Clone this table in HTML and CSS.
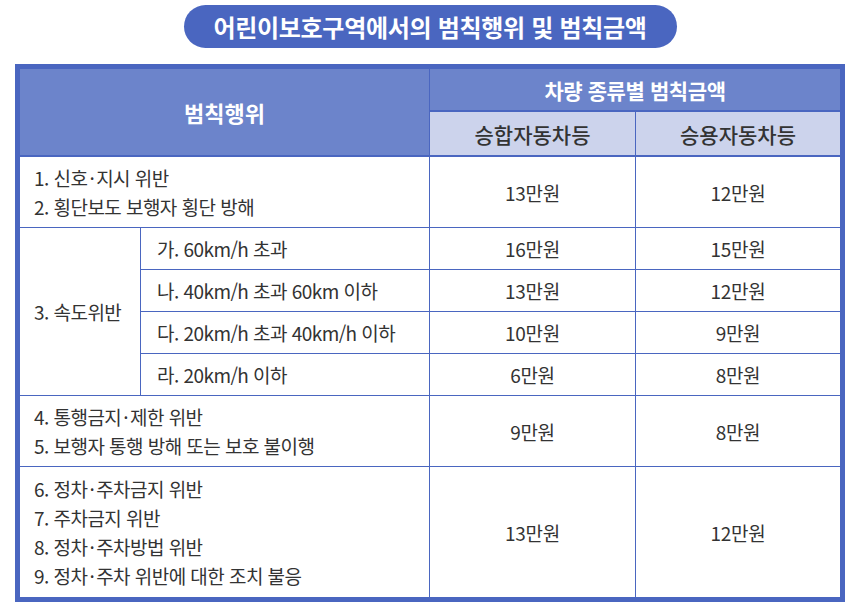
FILE: index.html
```html
<!DOCTYPE html>
<html lang="ko">
<head>
<meta charset="utf-8">
<title>어린이보호구역에서의 범칙행위 및 범칙금액</title>
<link rel="stylesheet" href="styles.css">
</head>
<body>
<div class="page">
  <h1 class="title">어린이보호구역에서의 범칙행위 및 범칙금액</h1>
  <table class="fines">
    <colgroup>
      <col class="c1">
      <col class="c2">
      <col class="c3">
      <col class="c4">
    </colgroup>
    <thead>
      <tr class="h1row">
        <th class="head-main head-big br bb2" rowspan="2" colspan="2">범칙행위</th>
        <th class="head-main bb2" colspan="2">차량 종류별 범칙금액</th>
      </tr>
      <tr class="h2row">
        <th class="head-sub br bb2">승합자동차등</th>
        <th class="head-sub bb2">승용자동차등</th>
      </tr>
    </thead>
    <tbody>
      <tr>
        <td class="act br bb" colspan="2">1. 신호<span class="dot">·</span>지시 위반<br>2. 횡단보도 보행자 횡단 방해</td>
        <td class="amt br bb">13만원</td>
        <td class="amt bb">12만원</td>
      </tr>
      <tr>
        <td class="act br bb" rowspan="4">3. 속도위반</td>
        <td class="sub br bb">가. 60km/h 초과</td>
        <td class="amt br bb">16만원</td>
        <td class="amt bb">15만원</td>
      </tr>
      <tr>
        <td class="sub br bb">나. 40km/h 초과 60km 이하</td>
        <td class="amt br bb">13만원</td>
        <td class="amt bb">12만원</td>
      </tr>
      <tr>
        <td class="sub br bb">다. 20km/h 초과 40km/h 이하</td>
        <td class="amt br bb">10만원</td>
        <td class="amt bb">9만원</td>
      </tr>
      <tr>
        <td class="sub br bb">라. 20km/h 이하</td>
        <td class="amt br bb">6만원</td>
        <td class="amt bb">8만원</td>
      </tr>
      <tr>
        <td class="act br bb" colspan="2">4. 통행금지<span class="dot">·</span>제한 위반<br>5. 보행자 통행 방해 또는 보호 불이행</td>
        <td class="amt br bb">9만원</td>
        <td class="amt bb">8만원</td>
      </tr>
      <tr class="last">
        <td class="act br" colspan="2">6. 정차<span class="dot">·</span>주차금지 위반<br>7. 주차금지 위반<br>8. 정차<span class="dot">·</span>주차방법 위반<br>9. 정차<span class="dot">·</span>주차 위반에 대한 조치 불응</td>
        <td class="amt br">13만원</td>
        <td class="amt">12만원</td>
      </tr>
    </tbody>
  </table>
</div>
</body>
</html>
```

FILE: styles.css
```css
* {
  box-sizing: border-box;
}

html, body {
  margin: 0;
  padding: 0;
  background: #ffffff;
}

body {
  font-family: "Noto Sans CJK KR", "Noto Sans", sans-serif;
  color: #333333;
}

.page {
  width: 830px;
  margin-left: 15px;
  padding-top: 5px;
  display: flex;
  flex-direction: column;
  align-items: center;
  gap: 16px;
}

.title {
  margin: 0;
  width: 493px;
  height: 43px;
  border-radius: 22px;
  background: #4a66c0;
  color: #ffffff;
  font-size: 24px;
  font-weight: 700;
  letter-spacing: -0.3px;
  line-height: 43px;
  text-align: center;
}

.fines {
  width: 830px;
  border: 5px solid #4a66c0;
  border-collapse: separate;
  border-spacing: 0;
  table-layout: fixed;
}

.c1 { width: 121px; }
.c2 { width: 289px; }
.c3 { width: 206px; }
.c4 { width: 204px; }

.br { border-right: 1px solid #4a66c0; }
.bb { border-bottom: 1px solid #4a66c0; }
.bb2 { border-bottom: 2px solid #4a66c0; }

.fines th,
.fines td {
  padding: 0;
  vertical-align: middle;
}

.fines .head-main {
  background: #6c84cb;
  color: #ffffff;
  font-size: 21px;
  font-weight: 700;
  letter-spacing: -0.4px;
  text-align: center;
}

.fines .head-big {
  font-size: 22px;
  letter-spacing: 0;
}

.h1row th {
  height: 43px;
}

.fines .head-sub {
  background: #ccd3ec;
  color: #333333;
  font-size: 21px;
  font-weight: 500;
  letter-spacing: 0;
  text-align: center;
  height: 45px;
}

.fines td {
  font-size: 19px;
  letter-spacing: -0.55px;
  line-height: 29px;
  padding-top: 6px;
  padding-bottom: 6px;
}

.fines .act {
  padding-left: 14px;
  text-align: left;
}

.fines .sub {
  padding-left: 16px;
  text-align: left;
}

.fines .amt {
  text-align: center;
  letter-spacing: -0.3px;
}

.dot {
  margin: 0 2px;
}

.fines .last td {
  padding-top: 7px;
  padding-bottom: 7px;
}
```
